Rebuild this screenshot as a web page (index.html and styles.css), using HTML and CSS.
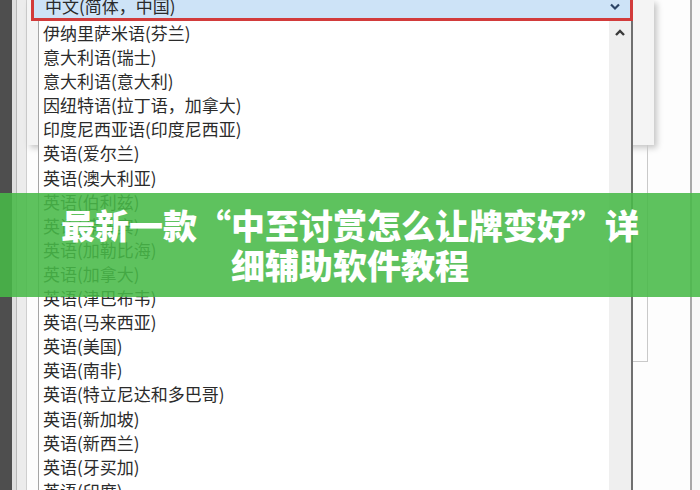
FILE: index.html
```html
<!DOCTYPE html>
<html lang="zh-CN">
<head>
<meta charset="utf-8">
<title>语言列表</title>
<link rel="stylesheet" href="styles.css">
</head>
<body>
<div class="screen">
  <div class="bg">
    <div class="c1"></div>
    <div class="c2"></div>
    <div class="c2b"></div>
    <div class="c3">
      <div class="dialog"></div>
      <div class="lower"><div class="box"></div></div>
    </div>
    <div class="c4"></div>
  </div>

  <div class="combo">
    <div class="select">
      <span class="sel-text">中文(简体，中国)</span>
      <svg class="sel-arrow" width="12" height="8" viewBox="0 0 12 8"><path d="M2 1.5 L6 5.5 L10 1.5" fill="none" stroke="#2b4466" stroke-width="2.2"/></svg>
    </div>
    <div class="list">
      <ul class="items">
        <li>伊纳里萨米语(芬兰)</li>
        <li>意大利语(瑞士)</li>
        <li>意大利语(意大利)</li>
        <li>因纽特语(拉丁语，加拿大)</li>
        <li>印度尼西亚语(印度尼西亚)</li>
        <li>英语(爱尔兰)</li>
        <li>英语(澳大利亚)</li>
        <li>英语(伯利兹)</li>
        <li>英语(菲律宾)</li>
        <li>英语(加勒比海)</li>
        <li>英语(加拿大)</li>
        <li>英语(津巴布韦)</li>
        <li>英语(马来西亚)</li>
        <li>英语(美国)</li>
        <li>英语(南非)</li>
        <li>英语(特立尼达和多巴哥)</li>
        <li>英语(新加坡)</li>
        <li>英语(新西兰)</li>
        <li>英语(牙买加)</li>
        <li>英语(印度)</li>
      </ul>
      <div class="scroll">
        <svg class="up" width="12" height="8" viewBox="0 0 12 8"><path d="M2 6 L6 2 L10 6" fill="none" stroke="#3a3a3a" stroke-width="2.4"/></svg>
      </div>
    </div>
  </div>

  <div class="banner">
    <div class="title">最新一款“中至讨赏怎么让牌变好”详细辅助软件教程</div>
  </div>
</div>
</body>
</html>
```
FILE: styles.css
```css
* { box-sizing: border-box; }
html, body { margin: 0; padding: 0; }
body { width: 700px; height: 490px; overflow: hidden; background: #fff; }

.screen {
  position: relative;
  width: 700px;
  height: 490px;
  overflow: hidden;
  font-family: "Noto Sans CJK SC", "Microsoft YaHei", sans-serif;
}

/* background windows */
.bg { display: flex; height: 490px; }
.c1 { width: 12px; background: #4e4e4e; }
.c2 { width: 5px; background: #dedede; border-right: 1px solid #b8b8b8; }
.c2b { width: 10px; background: #ececec; border-right: 1px solid #cfcfcf; }
.c3 { flex: 1; display: flex; flex-direction: column; background: #fdfdfd; }
.dialog {
  height: 145px;
  margin-right: 36px;
  background: #f4f4f4;
  box-shadow: 3px 3px 6px rgba(0,0,0,0.22);
}
.lower { flex: 1; padding-left: 606px; }
.box { width: 15px; height: 217px; border: 1px solid #c9c9c9; border-left: none; border-top: none; }
.c4 { width: 10px; background: #f8f8f8; border-left: 2px solid #a8a8a8; }

/* combo box */
.combo {
  position: absolute;
  left: 31px;
  top: -12px;
  width: 602px;
}
.select {
  height: 33px;
  border: 3px solid #d23b3b;
  background: #cde3f7;
  display: flex;
  align-items: center;
  justify-content: space-between;
  padding: 0 9px 0 11px;
  font-size: 17px;
  color: #2a2a2a;
}
.sel-text { line-height: 20px; margin-top: 2px; }
.sel-arrow { margin-top: 4px; }

.list {
  margin-left: 7px;
  width: 595px;
  height: 480px;
  display: flex;
  background: #fff;
  border-left: 1px solid #a6a6a6;
  border-right: 2px solid #707070;
}
.items {
  flex: 1;
  list-style: none;
  margin: 0;
  padding: 0 0 0 4px;
  font-size: 17px;
  line-height: 24.1px;
  color: #2b2b2b;
}
.items li { height: 24.1px; white-space: nowrap; }
.scroll {
  width: 22px;
  background: #efefef;
  display: flex;
  justify-content: center;
  padding-top: 8px;
}
.up { display: block; }

/* green overlay */
.banner {
  position: absolute;
  left: 0;
  top: 193px;
  width: 700px;
  height: 104px;
  background: rgba(72, 186, 72, 0.88);
  padding: 12px 0;
}
.title {
  width: 600px;
  margin: 0 auto;
  text-align: center;
  color: #fff;
  font-size: 34px;
  font-weight: 900;
  line-height: 40px;
}
```
